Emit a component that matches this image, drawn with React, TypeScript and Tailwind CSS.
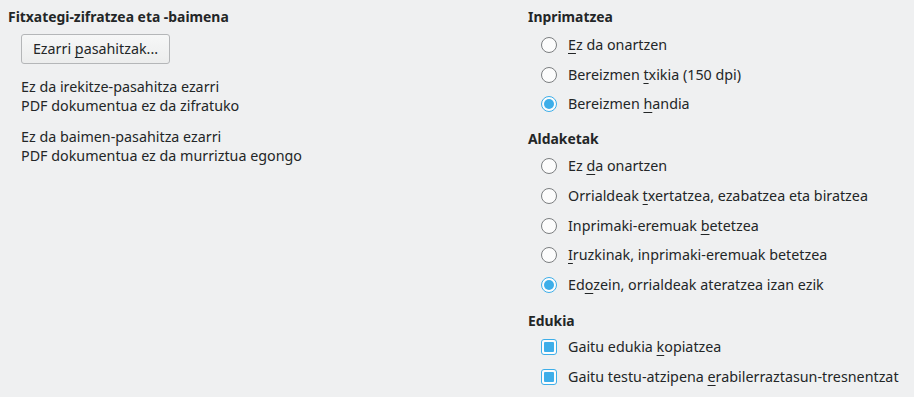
import React from "react";

const U = ({ children }: { children: React.ReactNode }) => (
  <span className="underline decoration-1 underline-offset-[3px]">{children}</span>
);

const Radio = ({ checked, children }: { checked?: boolean; children: React.ReactNode }) => (
  <div className="flex h-[29.75px] items-center pl-[13px]">
    {checked ? (
      <span className="flex h-[16px] w-[16px] shrink-0 items-center justify-center rounded-full border border-[#3daee9] bg-[#fcfcfc]">
        <span className="h-[10px] w-[10px] rounded-full bg-[#3daee9]" />
      </span>
    ) : (
      <span className="h-[16px] w-[16px] shrink-0 rounded-full border border-[#7b7e80] bg-[#fcfcfc]" />
    )}
    <span className="ml-[11px] whitespace-nowrap">{children}</span>
  </div>
);

const Check = ({ children }: { children: React.ReactNode }) => (
  <div className="flex h-[29.75px] items-center pl-[13px]">
    <span className="flex h-[16px] w-[16px] shrink-0 items-center justify-center rounded-[3px] border border-[#3daee9] bg-[#fcfcfc]">
      <span className="h-[10px] w-[10px] rounded-[1px] bg-[#3daee9]" />
    </span>
    <span className="ml-[11px] whitespace-nowrap">{children}</span>
  </div>
);

export default function App() {
  return (
    <div
      className="flex h-[397px] w-[914px] overflow-hidden bg-[#eff0f1] pl-[8px] pt-[8px] text-[14.3px] leading-[18px] text-[#232627]"
      style={{ fontFamily: '"Noto Sans", sans-serif' }}
    >
      <div className="flex w-[520px] shrink-0 flex-col">
        <div className="text-[13.9px] font-bold">Fitxategi-zifratzea eta -baimena</div>
        <div className="mt-[8px] pl-[13px]">
          <button className="h-[30px] w-[149px] rounded-[3px] border border-[#b4b6b8] bg-gradient-to-b from-[#f6f7f7] to-[#eceded] text-[#232627]">
            Ezarri <U>p</U>asahitzak...
          </button>
        </div>
        <div className="mt-[13px] pl-[13px] leading-[19px]">
          <div>Ez da irekitze-pasahitza ezarri</div>
          <div>PDF dokumentua ez da zifratuko</div>
        </div>
        <div className="mt-[12px] pl-[13px] leading-[19px]">
          <div>Ez da baimen-pasahitza ezarri</div>
          <div>PDF dokumentua ez da murriztua egongo</div>
        </div>
      </div>
      <div className="flex flex-col">
        <div className="text-[13.9px] font-bold">Inprimatzea</div>
        <div className="mt-[4px]">
          <Radio><U>E</U>z da onartzen</Radio>
          <Radio>Bereizmen <U>t</U>xikia (150 dpi)</Radio>
          <Radio checked>Bereizmen <U>h</U>andia</Radio>
        </div>
        <div className="mt-[11px] text-[13.9px] font-bold">Aldaketak</div>
        <div className="mt-[3px]">
          <Radio>Ez <U>d</U>a onartzen</Radio>
          <Radio>Orrialdeak <U>t</U>xertatzea, ezabatzea eta biratzea</Radio>
          <Radio>Inprimaki-eremuak <U>b</U>etetzea</Radio>
          <Radio><U>I</U>ruzkinak, inprimaki-eremuak betetzea</Radio>
          <Radio checked>Ed<U>o</U>zein, orrialdeak ateratzea izan ezik</Radio>
        </div>
        <div className="mt-[12px] text-[13.9px] font-bold">Edukia</div>
        <div className="mt-[2px]">
          <Check>Gaitu edukia <U>k</U>opiatzea</Check>
          <Check>Gaitu testu-atzipena <U>e</U>rabilerraztasun-tresnentzat</Check>
        </div>
      </div>
    </div>
  );
}
